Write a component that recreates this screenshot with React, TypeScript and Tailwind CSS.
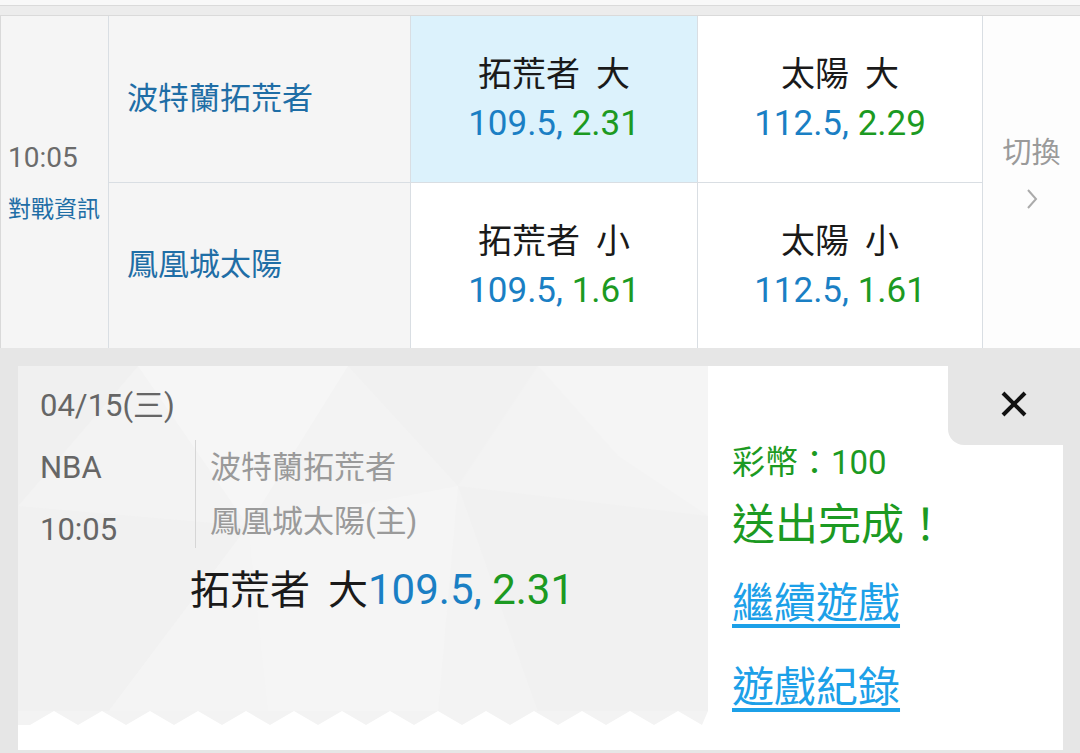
import React from "react";

function Zigzag() {
  const w = 690;
  const p = 48;
  const h = 14;
  let d = `M0 0 L0 ${h}`;
  let x = 12;
  let up = false;
  d += ` L${x} ${h}`;
  while (x < w) {
    x += p / 2;
    up = !up;
    d += ` L${Math.min(x, w)} ${up ? 0 : h}`;
  }
  d += ` L${w} 0 Z`;
  return (
    <svg width={w} height={h} viewBox={`0 0 ${w} ${h}`} className="block">
      <path d={d} fill="#f3f3f3" />
    </svg>
  );
}

function Pattern() {
  return (
    <svg className="absolute inset-0" width="690" height="346" viewBox="0 0 690 346">
      <polygon points="0,0 120,0 0,140" fill="#f0f0f0" />
      <polygon points="120,0 330,0 230,160" fill="#f6f6f6" />
      <polygon points="330,0 520,0 440,120" fill="#f1f1f1" />
      <polygon points="520,0 690,0 690,150 600,90" fill="#f5f5f5" />
      <polygon points="0,140 230,160 90,346 0,346" fill="#f1f1f1" />
      <polygon points="230,160 440,120 420,346 250,346" fill="#f5f5f5" />
      <polygon points="440,120 690,150 690,346 520,346" fill="#f1f1f1" />
      <polygon points="90,346 230,160 250,346" fill="#f4f4f4" />
    </svg>
  );
}

function BetCell({ label, line, odds, selected }: { label: string; line: string; odds: string; selected?: boolean }) {
  const parts = label.split(" ");
  return (
    <div className={`flex flex-col items-center justify-center ${selected ? "bg-[#dcf2fc]" : "bg-white"}`}>
      <div className="text-[34px] leading-[44px] text-[#1a1a1a]">
        <span className="mr-[16px]">{parts[0]}</span>
        <span>{parts[1]}</span>
      </div>
      <div className="mt-[6px] text-[35px] leading-[44px]">
        <span className="text-[#1a7fc4]">{line}, </span>
        <span className="text-[#1c9a22]">{odds}</span>
      </div>
    </div>
  );
}

export default function App() {
  return (
    <div className="w-[1080px] h-[753px] overflow-hidden bg-[#e6e6e6] font-['Roboto','Noto_Sans_CJK_TC',sans-serif]">
      <div className="h-[5px] bg-[#f8f8f8]" />
      <div className="h-[11px] bg-[#ececec] border-y border-[#dadada]" />
      <div className="grid grid-cols-[107px_301px_286px_284px_97px] grid-rows-[166px_165px] gap-px bg-[#d9dee3] border-l border-[#d9d9d9]">
        <div className="row-span-2 bg-[#f5f5f5] flex flex-col justify-center pl-[7px]">
          <div className="text-[28px] leading-[36px] text-[#6b6b6b]">10:05</div>
          <div className="mt-[19px] text-[23px] leading-[30px] text-[#1f6ea6]">對戰資訊</div>
        </div>
        <div className="bg-[#f5f5f5] flex items-center pl-[18px] text-[31px] text-[#1f6ea6]">波特蘭拓荒者</div>
        <BetCell label="拓荒者 大" line="109.5" odds="2.31" selected />
        <BetCell label="太陽 大" line="112.5" odds="2.29" />
        <div className="row-span-2 bg-[#fdfdfd] flex flex-col items-center justify-center pb-[20px]">
          <div className="text-[29px] leading-[36px] text-[#9a9a9a]">切換</div>
          <svg className="mt-[17px]" width="14" height="22" viewBox="0 0 14 22">
            <polyline points="3,2 11,11 3,20" fill="none" stroke="#ababab" strokeWidth="2" />
          </svg>
        </div>
        <div className="bg-[#f5f5f5] flex items-center pl-[18px] text-[31px] text-[#1f6ea6]">鳳凰城太陽</div>
        <BetCell label="拓荒者 小" line="109.5" odds="1.61" />
        <BetCell label="太陽 小" line="112.5" odds="1.61" />
      </div>

      <div className="relative ml-[18px] mt-[18px] w-[1045px] h-[384px] bg-white flex">
        <div className="w-[690px] flex flex-col">
          <div className="relative h-[345px] bg-[#f3f3f3] overflow-hidden">
            <Pattern />
            <div className="relative">
              <div className="pl-[22px] pt-[21px] text-[31px] leading-[38px] text-[#666]">04/15(三)</div>
              <div className="flex mt-[15px] h-[108px]">
                <div className="w-[177px] pl-[22px] text-[31px] leading-[38px] text-[#666]">
                  <div className="mt-[9px]">NBA</div>
                  <div className="mt-[24px]">10:05</div>
                </div>
                <div className="border-l border-[#d6d6d6] pl-[14px] text-[31px] leading-[38px] text-[#9a9a9a]">
                  <div className="mt-[9px]">波特蘭拓荒者</div>
                  <div className="mt-[16px]">鳳凰城太陽(主)</div>
                </div>
              </div>
              <div className="mt-[16px] pl-[172px] leading-[52px] flex items-baseline">
                <span className="text-[40px] text-[#1a1a1a] mr-[18px]">拓荒者</span>
                <span className="text-[40px] text-[#1a1a1a]">大</span>
                <span className="text-[42px] text-[#1a7fc4] whitespace-pre">109.5, </span>
                <span className="text-[42px] text-[#1c9a22]">2.31</span>
              </div>
            </div>
          </div>
          <Zigzag />
        </div>

        <div className="flex-1 pl-[24px]">
          <div className="mt-[77px] text-[33px] leading-[40px] text-[#1c9a22]">彩幣：100</div>
          <div className="mt-[17px] text-[43px] leading-[50px] text-[#1c9a22]">送出完成！</div>
          <div className="mt-[29px] text-[42px] leading-[50px] text-[#1ca0e8] underline underline-offset-[6px]">繼續遊戲</div>
          <div className="mt-[34px] text-[42px] leading-[50px] text-[#1ca0e8] underline underline-offset-[6px]">遊戲紀錄</div>
        </div>

        <div className="absolute right-0 top-0 w-[115px] h-[79px] bg-[#e6e6e6] rounded-bl-[16px] flex items-center justify-center pl-[17px] pb-[3px]">
          <svg width="28" height="28" viewBox="0 0 28 28">
            <line x1="3" y1="3" x2="25" y2="25" stroke="#111" strokeWidth="4" />
            <line x1="25" y1="3" x2="3" y2="25" stroke="#111" strokeWidth="4" />
          </svg>
        </div>
      </div>
    </div>
  );
}
